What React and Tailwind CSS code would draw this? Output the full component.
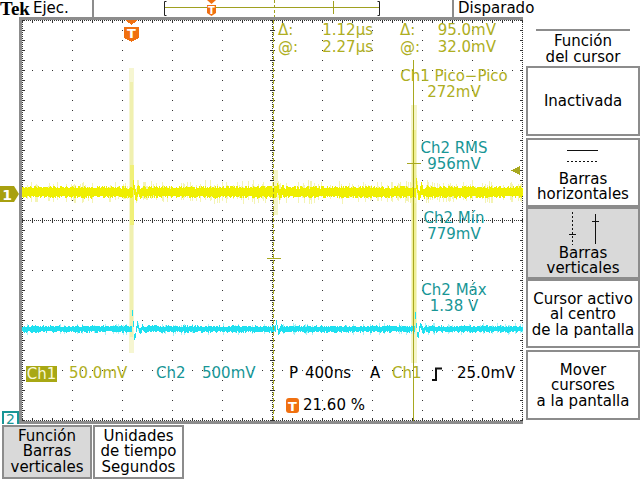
import React from 'react'

const OLIVE = '#aeae22'
const TEAL = '#189696'

// small seeded random so the traces look the same every render
function rng(seed) {
  let a = seed
  return () => {
    a = (a + 0x6d2b79f5) | 0
    let t = Math.imul(a ^ (a >>> 15), 1 | a)
    t = (t + Math.imul(t ^ (t >>> 7), 61 | t)) ^ t
    return ((t ^ (t >>> 14)) >>> 0) / 4294967296
  }
}

function ring(x, x0, amp, tau) {
  const d = x - x0
  if (d < 0 || d > tau * 5) return 0
  return -amp * Math.exp(-d / tau) * Math.cos(d * 1.2)
}

function trace(seed, center, spread, rings, haloRate, haloSpread) {
  const r = rng(seed)
  let core = ''
  let halo = ''
  for (let x = 0; x <= 500; x++) {
    let c = center
    for (const [x0, amp, tau] of rings) c += ring(x, x0, amp, tau)
    const a = spread[0] + r() * spread[1]
    const b = spread[0] + r() * spread[1]
    core += `M${x} ${(c - a).toFixed(1)}h1V${(c + b).toFixed(1)}h-1z`
    if (r() < haloRate) {
      const h1 = a + 1 + r() * haloSpread
      const h2 = b + 1 + r() * haloSpread
      halo += `M${x} ${(c - h1).toFixed(1)}h1V${(c + h2).toFixed(1)}h-1z`
    }
  }
  return { core, halo }
}

function gridPath() {
  let d = ''
  const dot = (x, y) => {
    d += `M${x} ${y}h1v1h-1z`
  }
  for (let k = 1; k < 10; k++) if (k !== 5) for (let j = 0; j <= 40; j++) dot(50 * k, 10 * j)
  for (let k = 1; k < 8; k++) if (k !== 4) for (let i = 0; i <= 50; i++) dot(10 * i, 50 * k)
  for (let y = 0; y <= 400; y += 2) {
    dot(250, y)
    dot(0, y)
    dot(500, y)
  }
  for (let x = 0; x <= 500; x += 2) {
    dot(x, 200)
    dot(x, 0)
    dot(x, 400)
  }
  for (let j = 0; j <= 40; j++) {
    const y = 10 * j
    d += `M248 ${y}h5v1h-5z M0 ${y}h3v1h-3z M498 ${y}h3v1h-3z`
  }
  for (let i = 0; i <= 50; i++) {
    const x = 10 * i
    d += `M${x} 198h1v5h-1z M${x} 0h1v3h-1z M${x} 398h1v3h-1z`
  }
  return d
}

const GRID = gridPath()
const CH1 = trace(11, 172, [3.5, 3], [[111, 7, 5], [394, 9, 5], [255, 4, 4]], 0.3, 5)
const CH2 = trace(23, 309, [2, 1.8], [[110, 16, 4], [393, 13, 4], [254, 7, 3]], 0.12, 2)

const TopBar = () => (
  <div className="flex h-[17px] shrink-0">
    <div className="w-[94px] shrink-0 flex items-center border-r-2 border-[#8c8c8c]">
      <span className="font-['Liberation_Serif',serif] font-bold text-[19px] leading-[17px]">Tek</span>
      <span className="ml-[3px] leading-[17px]">Ejec.</span>
    </div>
    <div className="w-[360px] shrink-0 border-r-2 border-[#8c8c8c]">
      <svg width="358" height="17" className="block">
        <path d="M72.5 1.5H70.5V15.5H72.5" stroke="#222" fill="none" />
        <path d="M283.5 1.5H285.5V15.5H283.5" stroke="#222" fill="none" />
        <line x1="71" y1="7.5" x2="285" y2="7.5" stroke="#a0a020" />
        <line x1="180.5" y1="0" x2="180.5" y2="17" stroke="#a0a020" strokeDasharray="3 2" />
        <line x1="239.5" y1="1" x2="239.5" y2="14" stroke="#a0a020" />
        <path d="M113 0H122L117.5 4Z" fill="#f07010" />
        <path d="M113 5H122V13L117.5 16L113 13Z" fill="#f07010" />
        <text x="117.5" y="13.5" fill="white" fontSize="10" fontWeight="bold" textAnchor="middle" fontFamily="DejaVu Sans">T</text>
      </svg>
    </div>
    <div className="pl-[4px] leading-[17px]">Disparado</div>
  </div>
)

const LeftStrip = () => (
  <div className="w-[19px] shrink-0 flex flex-col">
    <svg className="mt-[169px] block" width="19" height="16">
      <path d="M0 0H14L19 8L14 16H0Z" fill="#a8a010" />
      <text x="7" y="13.5" fill="white" fontSize="14" fontWeight="bold" textAnchor="middle" fontFamily="DejaVu Sans">1</text>
    </svg>
    <div className="mt-auto mb-[1px] ml-[2px] w-[17px] h-[13px] border-2 border-b-0 border-[#189696] text-[#189696] text-[14px] leading-[12px] text-center">
      2
    </div>
  </div>
)

const Graticule = () => (
  <div className="relative w-[504px] h-[407px] shrink-0 border-l-[3px] border-t-[3px] border-b-[3px] border-[#8c8c8c]">
    <svg width="501" height="401" className="block" shapeRendering="crispEdges">
      <path d={GRID} fill="#333" />
      {/* spikes */}
      <rect x="107" y="48" width="5" height="285" fill="#f6f6d2" />
      <rect x="108" y="62" width="3" height="255" fill="#f0f0b0" />
      <rect x="108" y="145" width="4" height="60" fill="#f0f078" />
      <rect x="389" y="85" width="6" height="258" fill="#f5f5c8" />
      <rect x="390" y="110" width="4" height="200" fill="#efef98" />
      <rect x="252" y="150" width="4" height="45" fill="#f5f5c8" />
      <path d={CH1.halo} fill="#f4f4b4" />
      <path d={CH1.core} fill="#efef00" />
      <path d={CH2.halo} fill="#a8f2f8" />
      <path d={CH2.core} fill="#1ee0f0" />
      {/* cursors */}
      <line x1="251.5" y1="0" x2="251.5" y2="401" stroke="#a8a820" strokeDasharray="4 2" />
      <line x1="245" y1="238.5" x2="259" y2="238.5" stroke="#a8a820" />
      <line x1="391.5" y1="40" x2="391.5" y2="401" stroke="#a8a820" />
      <line x1="385" y1="143.5" x2="399" y2="143.5" stroke="#a8a820" />
      {/* trigger */}
      <path d="M103 0H116L109.5 5Z" fill="#f07010" />
      <path d="M102 7H117V18L109.5 22L102 18Z" fill="#f07010" />
      <text x="109.5" y="18" fill="white" fontSize="13" fontWeight="bold" textAnchor="middle" fontFamily="DejaVu Sans">T</text>
      <path d="M489 150.5L498 146V155Z" fill="#a8a820" />
    </svg>

    <div className="absolute left-[256px] top-[2px] text-[#aeae22] leading-[17px]">
      <div className="flex"><span className="w-[40px]">Δ:</span><span className="w-[55px] text-right">1.12μs</span></div>
      <div className="flex"><span className="w-[40px]">@:</span><span className="w-[55px] text-right">2.27μs</span></div>
    </div>
    <div className="absolute left-[378px] top-[2px] text-[#aeae22] leading-[17px]">
      <div className="flex"><span className="w-[36px]">Δ:</span><span className="w-[60px] text-right">95.0mV</span></div>
      <div className="flex"><span className="w-[36px]">@:</span><span className="w-[60px] text-right">32.0mV</span></div>
    </div>

    <div className="absolute left-[372px] top-[48px] w-[120px] text-center leading-[16px] text-[#aeae22]">
      Ch1 Pico−Pico<br />272mV
    </div>
    <div className="absolute left-[372px] top-[120px] w-[120px] text-center leading-[16px] text-[#189696]">
      Ch2 RMS<br />956mV
    </div>
    <div className="absolute left-[372px] top-[190px] w-[120px] text-center leading-[16px] text-[#189696]">
      Ch2 Mín<br />779mV
    </div>
    <div className="absolute left-[372px] top-[262px] w-[120px] text-center leading-[16px] text-[#189696]">
      Ch2 Máx<br />1.38 V
    </div>

    <div className="absolute left-0 top-[345px] w-full h-[17px] leading-[17px]">
      <span className="absolute left-[4px] top-[1px] w-[31px] h-[16px] bg-[#a8a814] text-[#f8f8d8] text-center leading-[16px]">Ch1</span>
      <span className="absolute left-[47px]" style={{ color: OLIVE }}>50.0mV</span>
      <span className="absolute left-[134px]" style={{ color: TEAL }}>Ch2</span>
      <span className="absolute left-[180px]" style={{ color: TEAL }}>500mV</span>
      <span className="absolute left-[267px]">P</span>
      <span className="absolute left-[283px]">400ns</span>
      <span className="absolute left-[348px]">A</span>
      <span className="absolute left-[370px]" style={{ color: OLIVE }}>Ch1</span>
      <svg className="absolute left-[410px] top-[2px]" width="11" height="14">
        <path d="M0 13H4V1.5H10" stroke="#111" strokeWidth="2" fill="none" />
      </svg>
      <span className="absolute left-[435px]">25.0mV</span>
    </div>

    <div className="absolute left-[264px] top-[377px] flex items-center h-[17px]">
      <svg width="13" height="15" className="block">
        <rect x="0" y="0" width="13" height="15" rx="3" fill="#f07010" />
        <text x="6.5" y="12.5" fill="white" fontSize="13" fontWeight="bold" textAnchor="middle" fontFamily="DejaVu Sans">T</text>
      </svg>
      <span className="ml-[4px] leading-[17px]">21.60 %</span>
    </div>
  </div>
)

const MenuBox = ({ className = '', children }) => (
  <div className={`border-2 border-[#8c8c8c] flex flex-col items-center justify-center text-center leading-[16px] ${className}`}>
    {children}
  </div>
)

const SideMenu = () => (
  <div className="flex-1 pl-[3px] flex flex-col">
    <div className="h-[49px] flex flex-col items-center pt-[12px]">
      <div className="w-[94px] h-[2px] bg-[#8c8c8c]" />
      <div className="mt-[2px] text-center leading-[16px]">Función<br />del cursor</div>
    </div>
    <MenuBox className="h-[70px]">Inactivada</MenuBox>
    <MenuBox className="h-[69px] mt-[2px] justify-start pt-[9px]">
      <svg width="40" height="14" className="block">
        <line x1="4" y1="1.5" x2="35" y2="1.5" stroke="#111" />
        <line x1="4" y1="12.5" x2="35" y2="12.5" stroke="#111" strokeDasharray="2 2" />
      </svg>
      <div className="mt-[9px] leading-[15px]">Barras<br />horizontales</div>
    </MenuBox>
    <MenuBox className="h-[72px] bg-[#d9d9d9] border-[#7a7a7a] justify-start pt-[3px]">
      <svg width="40" height="34" className="block">
        <line x1="9.5" y1="0" x2="9.5" y2="33" stroke="#111" strokeDasharray="2 2" />
        <line x1="6" y1="22.5" x2="13" y2="22.5" stroke="#111" />
        <line x1="32.5" y1="2" x2="32.5" y2="32" stroke="#111" />
        <line x1="29" y1="9.5" x2="36" y2="9.5" stroke="#111" />
      </svg>
      <div className="leading-[15px]">Barras<br />verticales</div>
    </MenuBox>
    <MenuBox className="h-[69px] pt-[3px]">
      <div className="leading-[15.5px]">Cursor activo<br />al centro<br />de la pantalla</div>
    </MenuBox>
    <MenuBox className="h-[70px] mt-[2px] pt-[2px]">
      <div className="leading-[15.5px]">Mover<br />cursores<br />a la pantalla</div>
    </MenuBox>
  </div>
)

const BottomMenu = () => (
  <div className="flex h-[55px] pl-[2px] gap-[1px]">
    <div className="w-[90px] h-[54px] border-2 border-[#8c8c8c] bg-[#d9d9d9] flex items-center justify-center text-center leading-[15.5px]">
      Función<br />Barras<br />verticales
    </div>
    <div className="w-[91px] h-[54px] border-2 border-[#8c8c8c] bg-white flex items-center justify-center text-center leading-[15.5px]">
      Unidades<br />de tiempo<br />Segundos
    </div>
  </div>
)

export default function App() {
  return (
    <div className="w-[640px] h-[480px] bg-white overflow-hidden flex flex-col text-black font-['DejaVu_Sans',sans-serif] text-[15px]">
      <TopBar />
      <div className="flex h-[408px] shrink-0">
        <LeftStrip />
        <Graticule />
        <SideMenu />
      </div>
      <BottomMenu />
    </div>
  )
}
